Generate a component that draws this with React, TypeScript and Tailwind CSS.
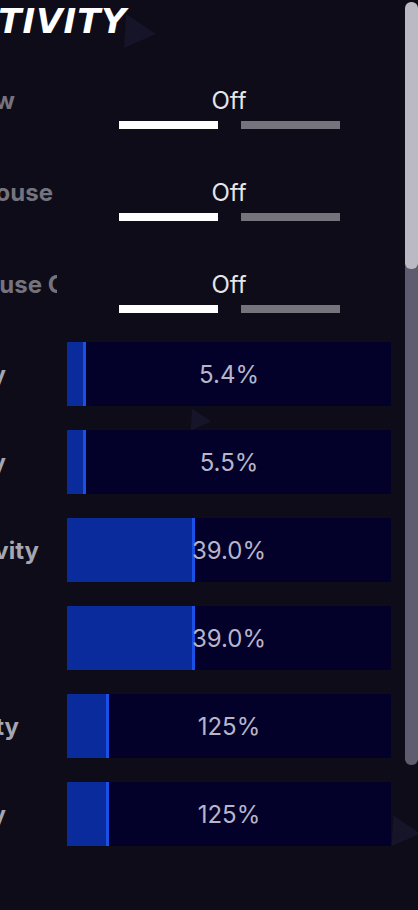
import React from "react";

type ToggleRow = { label: string; tail?: string; value: string; labelShift: string };
type SliderRow = { label: string; value: string; fill: number; labelShift: string };

const TOGGLES: ToggleRow[] = [
  { label: "Invert View", value: "Off", labelShift: "mr-[42px]" },
  { label: "Invert Mouse", value: "Off", labelShift: "mr-[4px]" },
  { label: "Invert Mouse", tail: "\u00a0Controls", value: "Off", labelShift: "mr-0" },
];

const SLIDERS: SliderRow[] = [
  { label: "X-Axis Sensitivity", value: "5.4%", fill: 19, labelShift: "mr-[51px]" },
  { label: "Y-Axis Sensitivity", value: "5.5%", fill: 19, labelShift: "mr-[51px]" },
  { label: "Targeting Sensitivity", value: "39.0%", fill: 128, labelShift: "mr-[18px]" },
  { label: "Scope Sensitivity", value: "39.0%", fill: 128, labelShift: "mr-[62px]" },
  { label: "Building Sensitivity", value: "125%", fill: 42, labelShift: "mr-[38px]" },
  { label: "Edit Mode Sensitivity", value: "125%", fill: 42, labelShift: "mr-[51px]" },
];

function Tri({ className }: { className: string }) {
  return (
    <svg className={className} viewBox="0 0 40 40" aria-hidden>
      <path d="M6 4 L36 24 L4 38 Z" fill="#151428" />
    </svg>
  );
}

export default function App() {
  return (
    <div className="relative flex h-[910px] w-[418px] overflow-hidden bg-[#0d0c18] font-['Inter','Liberation_Sans',sans-serif]">
      {/* faint background shards */}
      <Tri className="pointer-events-none absolute left-[120px] top-[10px] h-[40px] w-[40px]" />
      <Tri className="pointer-events-none absolute left-[188px] top-[406px] h-[26px] w-[26px]" />
      <Tri className="pointer-events-none absolute left-[388px] top-[812px] h-[36px] w-[36px]" />

      <div className="relative flex w-[405px] flex-col">
        <div className="h-[86px] pt-[4px]">
          <div className="flex w-[127px] justify-end">
            <span className="shrink-0 whitespace-nowrap font-['DejaVu_Sans',sans-serif] text-[34px] font-bold italic leading-none tracking-[1px] text-white">
              SENSITIVITY
            </span>
          </div>
        </div>

        <div className="flex flex-col gap-[49px]">
          {TOGGLES.map((t, i) => (
            <div key={i} className="flex gap-[10px]">
              <div className="flex w-[57px] justify-end overflow-hidden">
                <span
                  className={`shrink-0 whitespace-nowrap text-[24px] font-bold leading-[29px] text-[#75737d] ${t.labelShift}`}
                >
                  {t.label}
                  {t.tail && <span className="inline-block w-[15px]">{t.tail}</span>}
                </span>
              </div>
              <div className="flex w-[324px] flex-col items-center">
                <span className="text-[24px] leading-[29px] text-[#e6e5ea]">{t.value}</span>
                <div className="mt-[6px] flex gap-[23px]">
                  <div className="h-[8px] w-[99px] bg-white" />
                  <div className="h-[8px] w-[99px] bg-[#75737c]" />
                </div>
              </div>
            </div>
          ))}
        </div>

        <div className="mt-[29px] flex flex-col gap-[24px]">
          {SLIDERS.map((s) => (
            <div key={s.label} className="flex items-center gap-[10px]">
              <div className="flex w-[57px] justify-end overflow-hidden">
                <span
                  className={`shrink-0 whitespace-nowrap text-[24px] font-bold leading-[29px] text-[#a7a6b0] ${s.labelShift}`}
                >
                  {s.label}
                </span>
              </div>
              <div className="grid h-[64px] w-[324px] bg-[#030129]">
                <div
                  className="col-start-1 row-start-1 h-full border-r-[3px] border-[#1a50e6] bg-[#0a2b9c]"
                  style={{ width: `${s.fill}px` }}
                />
                <span className="col-start-1 row-start-1 self-center justify-self-center text-[24px] leading-[29px] text-[#b7b5cb]">
                  {s.value}
                </span>
              </div>
            </div>
          ))}
        </div>
      </div>

      <div className="w-[13px] pt-[2px]">
        <div className="h-[763px] overflow-hidden rounded-[6px] bg-[#5e5c6e]">
          <div className="h-[267px] rounded-[6px] bg-[#bbb9c3]" />
        </div>
      </div>
    </div>
  );
}
